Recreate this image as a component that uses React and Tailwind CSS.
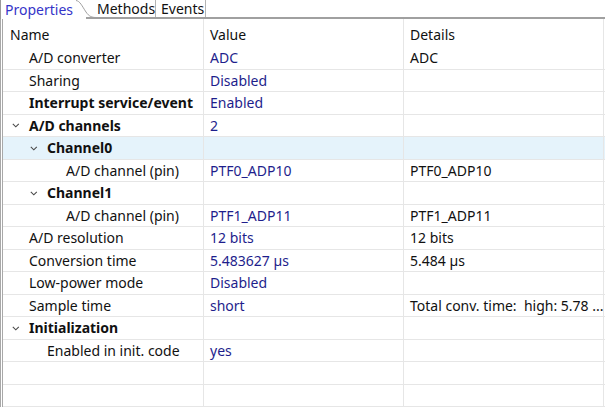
import React from "react";

const rows = [
  { label: "A/D converter", level: 1, value: "ADC", details: "ADC" },
  { label: "Sharing", level: 1, value: "Disabled" },
  { label: "Interrupt service/event", level: 1, bold: true, value: "Enabled" },
  { label: "A/D channels", level: 1, bold: true, exp: true, value: "2" },
  { label: "Channel0", level: 2, bold: true, exp: true, selected: true },
  { label: "A/D channel (pin)", level: 3, value: "PTF0_ADP10", details: "PTF0_ADP10" },
  { label: "Channel1", level: 2, bold: true, exp: true },
  { label: "A/D channel (pin)", level: 3, value: "PTF1_ADP11", details: "PTF1_ADP11" },
  { label: "A/D resolution", level: 1, value: "12 bits", details: "12 bits" },
  { label: "Conversion time", level: 1, value: "5.483627 µs", details: "5.484 µs" },
  { label: "Low-power mode", level: 1, value: "Disabled" },
  { label: "Sample time", level: 1, value: "short", details: "Total conv. time:  high: 5.78 ..." },
  { label: "Initialization", level: 1, bold: true, exp: true },
  { label: "Enabled in init. code", level: 2, value: "yes" },
  {},
  {},
];

const padByLevel = { 1: "pl-[8px]", 2: "pl-[26px]", 3: "pl-[45px]" };

function Chevron() {
  return (
    <svg width="8" height="5" viewBox="0 0 8 5" className="ml-[1px]">
      <polyline points="0.8,0.8 3.8,3.8 6.8,0.8" fill="none" stroke="#4a4a4a" strokeWidth="1.1" />
    </svg>
  );
}

function Row({ r }) {
  const bg = r.selected ? "bg-[#e5f3fb]" : "bg-white";
  return (
    <div className={`flex h-[23px] border-b border-[#e6e6e6] ${bg}`}>
      <div className={`w-[201px] shrink-0 border-r border-[#e6e6e6] flex items-center pt-[1px] ${r.level ? padByLevel[r.level] : ""}`}>
        {r.label !== undefined && (
          <>
            <div className="w-[18px] shrink-0 flex items-center">{r.exp && <Chevron />}</div>
            <span className={`whitespace-nowrap text-[#111] ${r.bold ? "font-bold" : ""}`}>{r.label}</span>
          </>
        )}
      </div>
      <div className="w-[200px] shrink-0 border-r border-[#e6e6e6] flex items-center pt-[1px] pl-[6px] text-[#1e1e8c] whitespace-nowrap">
        {r.value}
      </div>
      <div className="w-[200px] shrink-0 border-r border-[#e6e6e6] flex items-center pt-[1px] pl-[6px] text-[#111] whitespace-pre overflow-hidden">
        {r.details}
      </div>
    </div>
  );
}

export default function App() {
  return (
    <div
      className="w-[605px] h-[407px] bg-white overflow-hidden flex flex-col text-[14px] leading-none"
      style={{ fontFamily: '"Noto Sans", "Open Sans", sans-serif' }}
    >
      {/* tab strip */}
      <div className="h-[19px] flex shrink-0">
        <div className="w-[76px] h-[19px] border-l border-[#9a9a9a] flex items-center pl-[4px] text-[#3535c8] whitespace-nowrap">
          Properties
        </div>
        <svg width="20" height="19" viewBox="0 0 20 19" className="shrink-0">
          <path d="M0 0.5 C4 1, 6 6, 10 12 C13 16.5, 16 17.5, 20 17.5" fill="none" stroke="#a0a0a0" strokeWidth="1" />
          <rect x="10" y="17" width="10" height="2" fill="#a0a0a0" />
        </svg>
        <div className="flex flex-col flex-1">
          <div className="flex h-[17px]">
            <div className="w-[60px] border-r border-[#b4b4b4] flex items-center pl-[1px] text-[#111] whitespace-nowrap">Methods</div>
            <div className="w-[50px] border-r border-[#b4b4b4] flex items-center pl-[5px] text-[#111] whitespace-nowrap">Events</div>
          </div>
          <div className="h-[2px] bg-[#a0a0a0]" />
        </div>
      </div>
      {/* panel */}
      <div className="flex flex-1 min-h-0">
        <div className="w-[3px] shrink-0 border-l border-r border-[#a8a8a8]" />
        <div className="flex flex-col flex-1 min-w-0">
          <div className="flex h-[28px] shrink-0">
            <div className="w-[201px] shrink-0 border-r border-[#e6e6e6] flex items-center pt-[4px] pl-[7px] text-[#111]">Name</div>
            <div className="w-[200px] shrink-0 border-r border-[#e6e6e6] flex items-center pt-[4px] pl-[6px] text-[#111]">Value</div>
            <div className="w-[200px] shrink-0 border-r border-[#e6e6e6] flex items-center pt-[4px] pl-[6px] text-[#111]">Details</div>
          </div>
          {rows.map((r, i) => (
            <Row key={i} r={r} />
          ))}
        </div>
      </div>
    </div>
  );
}
